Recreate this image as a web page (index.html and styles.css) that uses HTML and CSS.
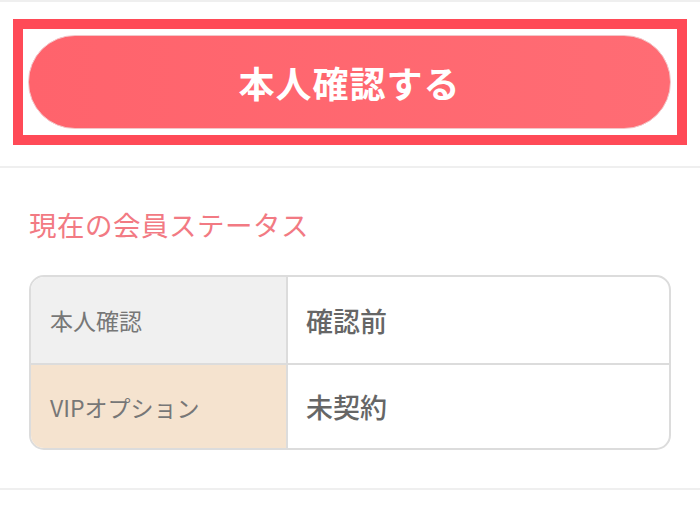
FILE: index.html
```html
<!DOCTYPE html>
<html lang="ja">
<head>
<meta charset="utf-8">
<link rel="stylesheet" href="styles.css">
</head>
<body>
<div class="page">
  <section class="cta">
    <div class="frame">
      <button class="verify-btn">本人確認する</button>
    </div>
  </section>
  <section class="status">
    <h2 class="status-title">現在の会員ステータス</h2>
    <div class="status-table">
      <div class="row">
        <div class="label label-gray">本人確認</div>
        <div class="value">確認前</div>
      </div>
      <div class="row">
        <div class="label label-beige">VIPオプション</div>
        <div class="value">未契約</div>
      </div>
    </div>
  </section>
  <section class="next"></section>
</div>
</body>
</html>
```

FILE: styles.css
```css
* { box-sizing: border-box; }
html, body { margin: 0; padding: 0; background: #fff; }
body {
  font-family: "Noto Sans CJK JP", "Noto Sans", sans-serif;
  width: 700px;
  height: 531px;
  overflow: hidden;
}
.page {
  border-top: 2px solid #efefef;
}
.cta {
  padding: 17px 13px 21px;
  border-bottom: 2px solid #efefef;
}
.frame {
  border: 10px solid #ff4a57;
  padding: 6px 6px 6px 5px;
}
.verify-btn {
  display: flex;
  align-items: center;
  justify-content: center;
  width: 100%;
  height: 94px;
  border: 1px solid #f3c6c9;
  border-radius: 47px;
  background: linear-gradient(90deg, #ff636c, #ff6c74);
  color: #fff;
  font-family: inherit;
  font-size: 36px;
  font-weight: 700;
  letter-spacing: 1px;
  padding: 0;
}
.status {
  padding: 36px 29px 38px 29px;
  border-bottom: 2px solid #efefef;
}
.status-title {
  margin: 0 0 31px;
  font-size: 27.5px;
  line-height: 40px;
  font-weight: 400;
  color: #f27a83;
  letter-spacing: 0.5px;
}
.status-table {
  border: 2px solid #dcdcdc;
  border-radius: 15px;
  overflow: hidden;
}
.row {
  display: flex;
  height: 86px;
}
.row + .row {
  border-top: 2px solid #dcdcdc;
  height: 85px;
}
.label {
  width: 257px;
  flex: none;
  display: flex;
  align-items: center;
  padding-left: 19px;
  border-right: 2px solid #dcdcdc;
  font-size: 23px;
  color: #777;
  font-weight: 400;
}
.label-gray { background: #f0f0f0; }
.label-beige { background: #f5e3cf; }
.value {
  flex: 1;
  display: flex;
  align-items: center;
  padding-left: 18px;
  font-size: 27px;
  font-weight: 500;
  color: #666;
}
.next { height: 60px; }
```
